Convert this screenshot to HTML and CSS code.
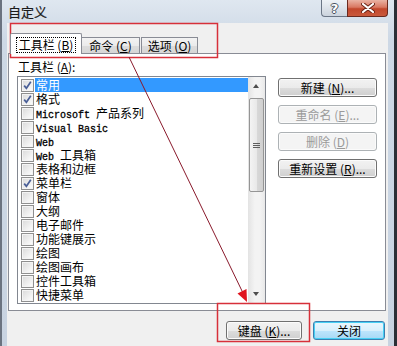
FILE: index.html
```html
<!DOCTYPE html>
<html lang="zh-CN">
<head>
  <meta charset="UTF-8">
  <title>自定义</title>
  <link rel="stylesheet" href="styles.css">
</head>
<body>
  <div class="window">
    <div class="titlebar">
      <span class="title">自定义</span>
      <div class="caption-btns">
        <span class="cap-help">?</span>
        <span class="cap-close">
          <svg width="14" height="10" viewBox="0 0 14 10"><path d="M2 1 L12 9 M12 1 L2 9" stroke="#6b2416" stroke-width="4" stroke-linecap="round"/><path d="M2 1 L12 9 M12 1 L2 9" stroke="#fff" stroke-width="2.2" stroke-linecap="round"/></svg>
        </span>
      </div>
    </div>

    <div class="client">
      <div class="tabs">
        <div class="tab active"><span class="focus">工具栏 (<u>B</u>)</span></div>
        <div class="tab">命令 (<u>C</u>)</div>
        <div class="tab">选项 (<u>O</u>)</div>
      </div>

      <div class="panel">
        <div class="list-col">
          <div class="label">工具栏 (<u>A</u>):</div>
          <div class="listbox">
            <ul class="items">
              <li class="row selected"><span class="check on"></span><span class="name">常用</span></li>
              <li class="row"><span class="check on"></span><span class="name">格式</span></li>
              <li class="row"><span class="check"></span><span class="name"><span class="lat">Microsoft </span>产品系列</span></li>
              <li class="row"><span class="check"></span><span class="name"><span class="lat">Visual Basic</span></span></li>
              <li class="row"><span class="check"></span><span class="name"><span class="lat">Web</span></span></li>
              <li class="row"><span class="check"></span><span class="name"><span class="lat">Web </span>工具箱</span></li>
              <li class="row"><span class="check"></span><span class="name">表格和边框</span></li>
              <li class="row"><span class="check on"></span><span class="name">菜单栏</span></li>
              <li class="row"><span class="check"></span><span class="name">窗体</span></li>
              <li class="row"><span class="check"></span><span class="name">大纲</span></li>
              <li class="row"><span class="check"></span><span class="name">电子邮件</span></li>
              <li class="row"><span class="check"></span><span class="name">功能键展示</span></li>
              <li class="row"><span class="check"></span><span class="name">绘图</span></li>
              <li class="row"><span class="check"></span><span class="name">绘图画布</span></li>
              <li class="row"><span class="check"></span><span class="name">控件工具箱</span></li>
              <li class="row"><span class="check"></span><span class="name">快捷菜单</span></li>
            </ul>
            <div class="scrollbar">
              <div class="sb-arrow up"></div>
              <div class="sb-thumb"><span class="grip"></span></div>
              <div class="sb-space"></div>
              <div class="sb-arrow down"></div>
            </div>
          </div>
        </div>

        <div class="actions">
          <div class="btn">新建 (<u>N</u>)...</div>
          <div class="btn disabled">重命名 (<u>E</u>)...</div>
          <div class="btn disabled">删除 (<u>D</u>)</div>
          <div class="btn">重新设置 (<u>R</u>)...</div>
        </div>
      </div>

      <div class="footer">
        <div class="btn keys">键盘 (<u>K</u>)...</div>
        <div class="btn close default">关闭</div>
      </div>
    </div>

    <!-- annotation overlay -->
    <svg class="annot" width="397" height="346" viewBox="0 0 397 346">
      <rect x="10.5" y="23.5" width="207" height="34" fill="none" stroke="#d7303a" stroke-width="1.5"/>
      <rect x="217.5" y="303.5" width="92" height="38" fill="none" stroke="#d7303a" stroke-width="1.5"/>
      <line x1="129" y1="57" x2="243" y2="293" stroke="#8a1a2c" stroke-width="1"/>
      <polygon points="247,302 237.5,293.5 246.5,289" fill="#e0141e"/>
    </svg>
  </div>
</body>
</html>
```

FILE: styles.css
```css
* {
  box-sizing: border-box;
}

body {
  margin: 0;
  background: #2b2f36;
  font-family: "Noto Sans CJK SC", sans-serif;
  font-size: 12px;
  color: #000;
}

u {
  text-decoration: underline;
  text-underline-offset: 1px;
}

.window {
  position: relative;
  width: 394px;
  height: 346px;
  border-left: 2px solid #6b7380;
  background: linear-gradient(#dfe7f0, #cdd8e5 40px, #c8d3e1);
  overflow: hidden;
}

/* title bar */
.titlebar {
  height: 23px;
  display: flex;
  justify-content: space-between;
  align-items: flex-start;
  padding: 0 6px 0 6px;
}

.title {
  font-size: 13px;
  line-height: 24px;
  color: #1a1a1a;
  -webkit-text-stroke: 0.2px #1a1a1a;
}

.caption-btns {
  display: flex;
}

.cap-help,
.cap-close {
  height: 17px;
  display: flex;
  align-items: center;
  justify-content: center;
}

.cap-help {
  width: 26px;
  border: 1px solid #6b7686;
  border-top: none;
  border-right: none;
  border-radius: 0 0 0 4px;
  background: linear-gradient(#eef2f6, #dde3ea 50%, #cbd3dd);
  color: #fff;
  font-family: "DejaVu Sans", sans-serif;
  font-size: 13px;
  font-weight: bold;
  line-height: 15px;
  text-shadow: 1px 0 0 #4a5260, -1px 0 0 #4a5260, 0 1px 0 #4a5260, 0 -1px 0 #4a5260;
}

.cap-close {
  width: 41px;
  border: 1px solid #6a2a1f;
  border-top: none;
  border-radius: 0 0 4px 0;
  background: linear-gradient(#eab3a4, #d97862 45%, #c2472c 55%, #c9593c);
}

/* client area */
.client {
  margin-left: 5px;
  width: 381px;
  height: 323px;
  background: #f0f0f0;
  padding-top: 10px;
}

.tabs {
  display: flex;
  align-items: flex-start;
  height: 20px;
  margin-left: 3px;
}

.tab {
  height: 16px;
  margin-top: 4px;
  border: 1px solid #898c95;
  border-bottom: none;
  border-left: none;
  background: linear-gradient(#f3f3f3, #ebebeb 50%, #dddddd 50%, #d6d6d6);
  display: flex;
  align-items: center;
  justify-content: center;
  line-height: 14px;
  white-space: nowrap;
  width: 58px;
}

.tab:last-child {
  width: 57px;
  margin-left: 1px;
  border-left: 1px solid #898c95;
}

.tab.active {
  position: relative;
  z-index: 1;
  width: 72px;
  height: 21px;
  margin-top: 0;
  border-left: 1px solid #898c95;
  background: #fff;
  border-radius: 2px 2px 0 0;
  align-items: flex-start;
  padding-top: 4px;
}

.focus {
  padding: 0 2px;
  outline: 1px dotted #000;
  line-height: 14px;
}

.panel {
  display: flex;
  width: 378px;
  height: 258px;
  margin-left: 1px;
  border: 1px solid #898c95;
  background: #fff;
  padding: 6px 0 0 8px;
}

.label {
  line-height: 14px;
  padding-left: 1px;
}

/* list box */
.listbox {
  display: flex;
  width: 249px;
  height: 228px;
  margin-top: 2px;
  border: 1px solid #828790;
  background: #fff;
}

.items {
  flex: 1;
  list-style: none;
  margin: 0;
  padding: 1px 0 0;
}

.row {
  height: 14px;
  display: flex;
  align-items: center;
}

.check {
  width: 13px;
  height: 13px;
  margin-left: 3px;
  border: 1px solid #8f8f8f;
  background: linear-gradient(135deg, #d9d9d9, #f4f4f4 70%, #fff);
  box-shadow: inset 0 0 0 1px #f4f4f4;
  flex: none;
}

.check.on {
  background:
    url("data:image/svg+xml;utf8,<svg xmlns='http://www.w3.org/2000/svg' width='11' height='11'><path d='M2.2 5.6 L4.4 8.3 L8.8 1.8' fill='none' stroke='%234a5f97' stroke-width='1.7'/></svg>") center / 11px 11px no-repeat,
    linear-gradient(135deg, #d9d9d9, #f4f4f4 70%, #fff);
}

.name {
  margin-left: 1px;
  padding: 0 1px;
  line-height: 14px;
  height: 14px;
  white-space: pre;
}

.row.selected .name {
  flex: 1;
  background: #3399ff;
  color: #fff;
}

.lat {
  font-family: "Liberation Mono", monospace;
  font-size: 10px;
  -webkit-text-stroke: 0.3px #000;
}

/* scroll bar */
.scrollbar {
  width: 17px;
  display: flex;
  flex-direction: column;
  background: linear-gradient(90deg, #e3e3e3, #f3f3f3 40%, #f3f3f3 70%, #e8e8e8);
}

.sb-arrow {
  height: 17px;
  position: relative;
}

.sb-arrow::after {
  content: "";
  position: absolute;
  left: 5px;
  top: 7px;
  border-left: 3.5px solid transparent;
  border-right: 3.5px solid transparent;
}

.sb-arrow.up::after {
  border-bottom: 4px solid #4d4d4d;
}

.sb-arrow.down::after {
  top: 6px;
  border-top: 4px solid #4d4d4d;
}

.sb-thumb {
  height: 94px;
  margin: 4px 1px 0;
  border: 1px solid #959595;
  border-radius: 2px;
  background: linear-gradient(90deg, #f4f4f4, #e9e9e9 50%, #d9d9d9 50%, #d0d0d0);
  display: flex;
  align-items: center;
  justify-content: center;
}

.grip {
  width: 7px;
  height: 5px;
  border-top: 1px solid #5e5e5e;
  border-bottom: 1px solid #5e5e5e;
  position: relative;
}

.grip::after {
  content: "";
  position: absolute;
  left: 0;
  right: 0;
  top: 1px;
  border-top: 1px solid #5e5e5e;
}

.sb-space {
  flex: 1;
}

/* buttons */
.actions {
  display: flex;
  flex-direction: column;
  gap: 8px;
  margin: 18px 0 0 12px;
}

.btn {
  width: 99px;
  height: 19px;
  border: 1px solid #707070;
  border-radius: 3px;
  background: linear-gradient(#f2f2f2, #ebebeb 50%, #dddddd 50%, #cfcfcf);
  box-shadow: inset 0 0 0 1px #fbfbfb;
  display: flex;
  align-items: center;
  justify-content: center;
  line-height: 14px;
  white-space: nowrap;
}

.btn.disabled {
  border-color: #adb2b5;
  background: #f4f4f4;
  color: #9a9a9a;
}

.footer {
  display: flex;
  justify-content: flex-end;
  gap: 11px;
  margin-top: 10px;
  padding-right: 3px;
}

.btn.keys {
  width: 76px;
}

.btn.close {
  width: 72px;
}

.btn.default {
  border-color: #3c7fb1;
  background: linear-gradient(#eaf6fd, #d9f0fc 50%, #bee6fd 50%, #a7d9f5);
  box-shadow: inset 0 0 0 1px #48d0f4;
}

.annot {
  position: absolute;
  left: -2px;
  top: 0;
  pointer-events: none;
}
```
